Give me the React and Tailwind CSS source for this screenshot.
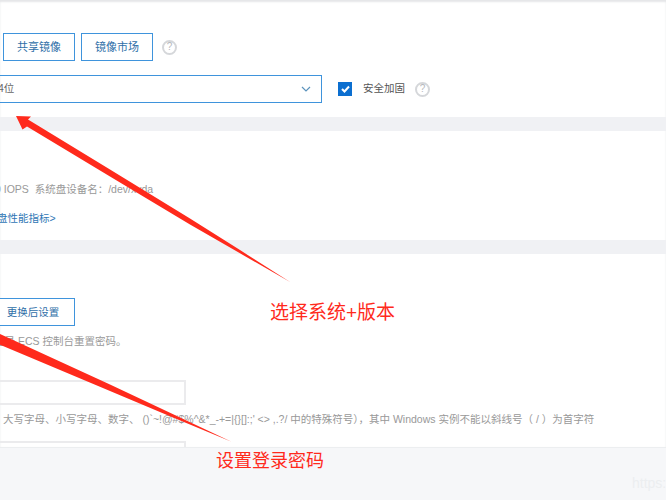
const sans = "font-['Liberation_Sans','Noto_Sans_CJK_SC',sans-serif]";

function Help() {
  return (
    <span className="flex h-[15px] w-[15px] shrink-0 items-center justify-center rounded-full border-2 border-[#d5d7da] text-[10px] leading-none text-[#b5b8bc]">
      ?
    </span>
  );
}

function Gap() {
  return <div className="h-[14px] shrink-0 bg-[#f0f1f4]" />;
}

function OutlineButton({ children, className = "" }) {
  return (
    <button className={"flex h-[28px] items-center justify-center border border-[#3f94dc] bg-white text-[#2f6fa8] " + className}>
      {children}
    </button>
  );
}

export default function App() {
  return (
    <div className={"relative h-[500px] w-[666px] overflow-hidden bg-white " + sans}>
      <div className="flex h-[447px] flex-col border-t border-[#e6e7e9] bg-white shadow-[inset_0_1px_2px_#e5e6e8]">
        <section className="h-[116px] shrink-0 pt-[32px]">
          <div className="flex items-center gap-[6px] pl-[3px]">
            <OutlineButton className="w-[72px] text-[11px]">共享镜像</OutlineButton>
            <OutlineButton className="w-[72px] text-[11px]">镜像市场</OutlineButton>
            <span className="ml-[3px]"><Help /></span>
          </div>
          <div className="mt-[14px] flex items-center">
            <div className="ml-[-10px] flex h-[28px] w-[332px] items-center justify-between border border-[#3f94dc] pl-[7px] pr-[10px] text-[10.5px] text-[#666]">
              <span>4位</span>
              <svg width="10" height="7" viewBox="0 0 10 7" fill="none" stroke="#5d94bd" strokeWidth="1.2">
                <path d="M1 1l4 4 4-4" />
              </svg>
            </div>
            <span className="ml-[16px] flex h-[14px] w-[14px] items-center justify-center bg-[#0c6fd0]">
              <svg width="9" height="8" viewBox="0 0 9 8" fill="none" stroke="white" strokeWidth="2">
                <path d="M1 4l2.5 2.5L8 1.5" />
              </svg>
            </span>
            <span className="ml-[11px] text-[10.5px] text-[#555]">安全加固</span>
            <span className="ml-[10px]"><Help /></span>
          </div>
        </section>
        <Gap />
        <section className="h-[109px] shrink-0 pt-[50px] text-[10.5px] leading-[16px]">
          <p className="ml-[-5px] whitespace-nowrap text-[#999]">0 IOPS &nbsp;系统盘设备名：/dev/xvda</p>
          <p className="ml-[-3px] mt-[13px] text-[#2f76b5]">盘性能指标&gt;</p>
        </section>
        <Gap />
        <section className="min-h-0 flex-1 overflow-hidden pt-[44px] text-[10.5px] leading-[16px]">
          <OutlineButton className="ml-[-9px] w-[84px] text-[10.5px]">更换后设置</OutlineButton>
          <p className="ml-[-6px] mt-[7px] whitespace-nowrap text-[#999]">登录 ECS 控制台重置密码。</p>
          <div className="ml-[-2px] mt-[31px] h-[25px] w-[188px] border-2 border-[#ebebed]" />
          <p className="mt-[6px] whitespace-nowrap pl-[3px] text-[#999]">
            大写字母、小写字母、数字、 ()`~!@#$%^&amp;*_-+=|{"{}"}[]:;' &lt;&gt; ,.?/ 中的特殊符号），其中 Windows 实例不能以斜线号（ / ）为首字符
          </p>
          <div className="ml-[-2px] mt-[14px] h-[25px] w-[188px] border-2 border-[#ebebed]" />
        </section>
      </div>
      <div className="h-[53px] border-t border-[#eceef0] bg-[#f6f7f9]" />

      <svg className="absolute left-0 top-0" width="666" height="500" viewBox="0 0 666 500">
        <path d="M16 116L31 116.5L28 119.5L110 169.5L190 218.4L240 250.1L290.5 282.3L240 253.3L190 224.4L110 176.5L27 126.5L22.5 129.5Z" fill="#ff2a1c" />
        <path d="M-2 333L110 384.5L170 412.7L231.5 441.7L170 416.3L110 391L-2 344Z" fill="#ff2a1c" />
      </svg>
      <span className="absolute left-[270px] top-[302px] text-[19px] leading-[22px] text-[#ff2a1c]">选择系统+版本</span>
      <span className="absolute left-[216px] top-[450px] text-[18px] leading-[22px] text-[#ff2a1c]">设置登录密码</span>
      <span className="absolute left-[632px] top-[474px] text-[14px] leading-[18px] text-[#eceef0]">https:</span>
    </div>
  );
}
